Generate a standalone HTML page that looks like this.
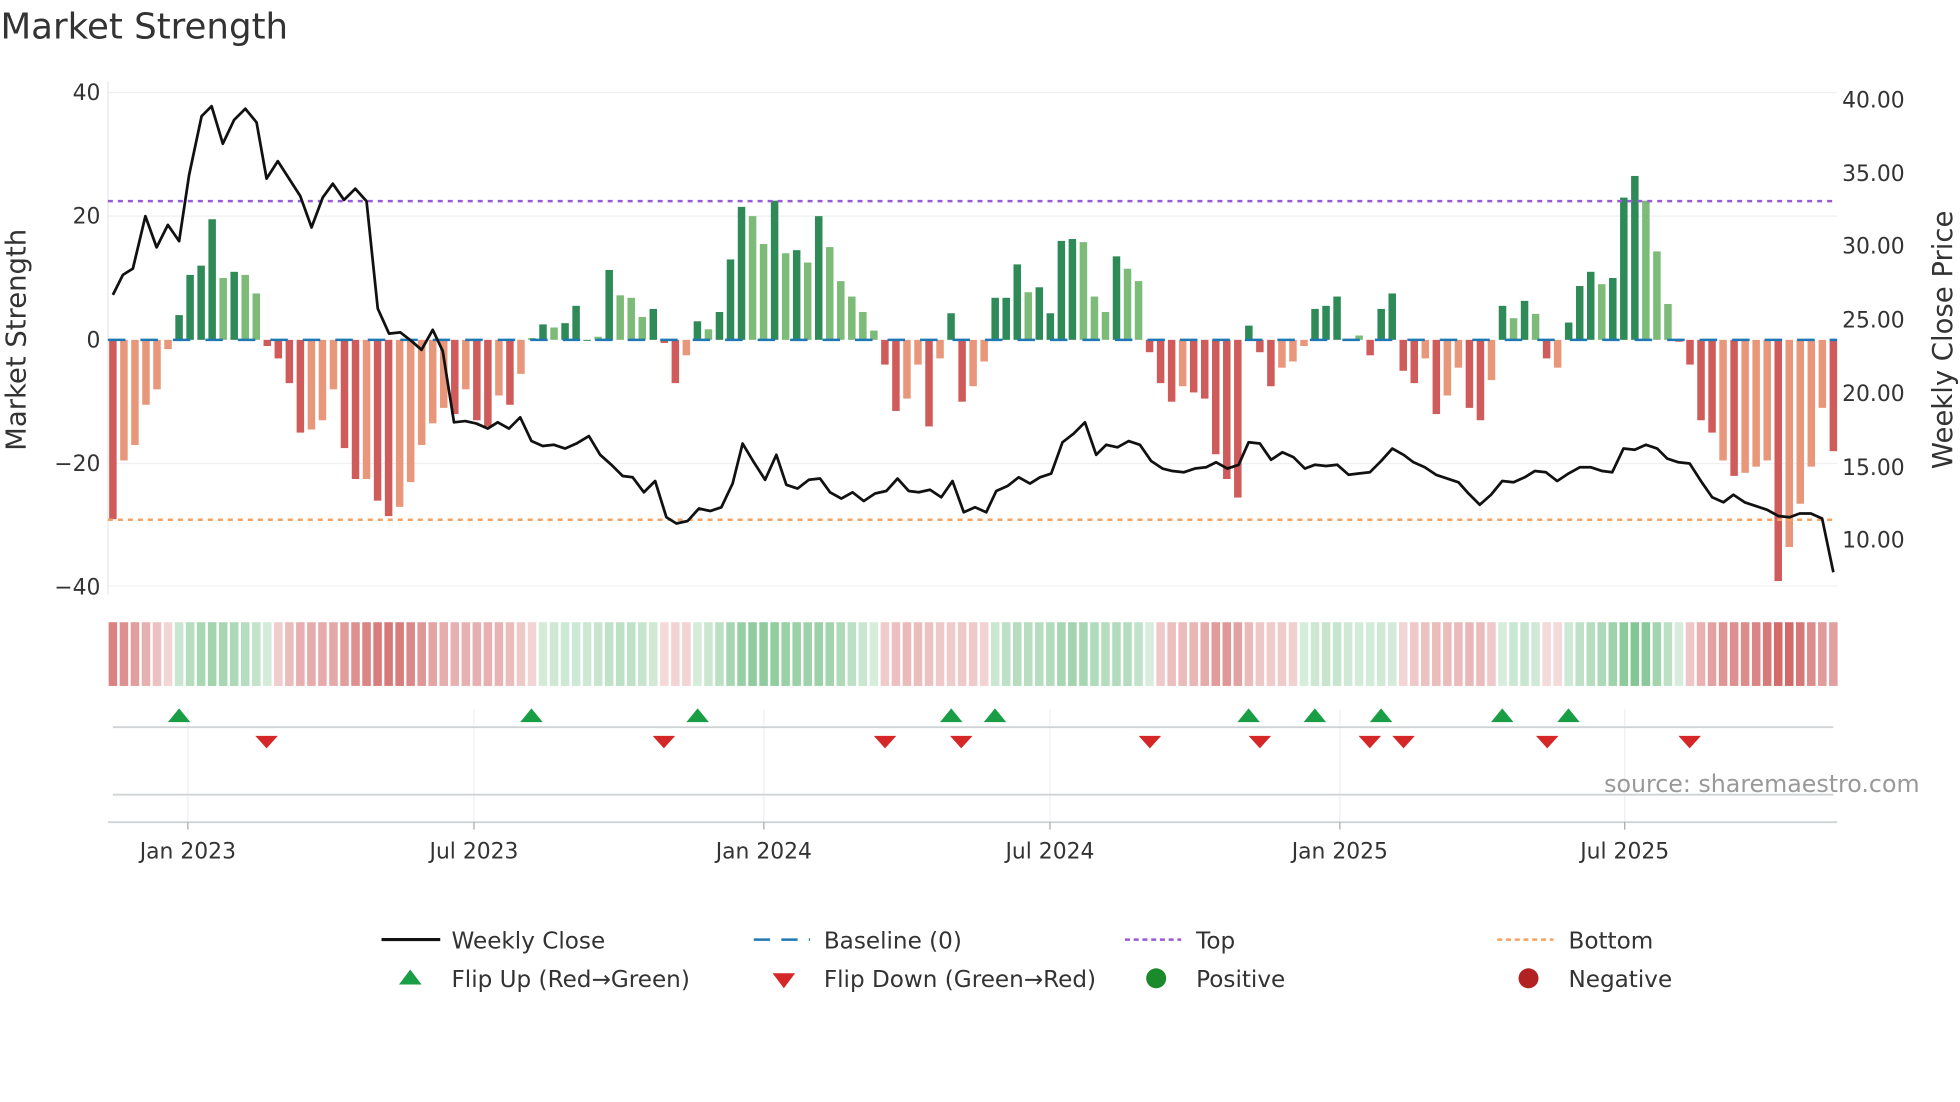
<!DOCTYPE html>
<html><head><meta charset="utf-8"><style>
html,body{margin:0;padding:0;background:#fff;}
svg{display:block;font-family:"DejaVu Sans","Liberation Sans",sans-serif;}
</style></head><body>
<svg id="s" width="1960" height="1102" viewBox="0 0 1568 882" xmlns="http://www.w3.org/2000/svg">
<rect width="1568" height="882" fill="#fff"/>
<text x="0" y="31" font-size="28.5" fill="#333">Market Strength</text>
<g stroke="#eef0f2" stroke-width="1">
<line x1="86" y1="74" x2="1470" y2="74"/><line x1="86" y1="173" x2="1470" y2="173"/>
<line x1="86" y1="371" x2="1470" y2="371"/><line x1="86" y1="469" x2="1470" y2="469"/>
</g>
<line x1="86" y1="65" x2="86" y2="476" stroke="#e6e8ea"/>
<g font-size="17.5" fill="#333" text-anchor="end">
<text x="80" y="80">40</text><text x="80" y="179">20</text><text x="80" y="278">0</text>
<text x="80" y="377">−20</text><text x="80" y="476">−40</text>
</g>
<g font-size="17.5" fill="#333">
<text x="1474" y="86">40.00</text><text x="1474" y="145">35.00</text><text x="1474" y="203">30.00</text>
<text x="1474" y="262">25.00</text><text x="1474" y="321">20.00</text><text x="1474" y="380">15.00</text>
<text x="1474" y="438">10.00</text>
</g>
<text transform="translate(20,272) rotate(-90)" font-size="22" fill="#333" text-anchor="middle">Market Strength</text>
<text transform="translate(1562,272) rotate(-90)" font-size="22" fill="#333" text-anchor="middle">Weekly Close Price</text>
<g id="bars"></g>
<line x1="86" y1="272" x2="1470" y2="272" stroke="#1f77b4" stroke-width="2" stroke-dasharray="14,12"/>
<line x1="86" y1="161" x2="1470" y2="161" stroke="#9b59d6" stroke-width="2" stroke-dasharray="4,4"/>
<line x1="86" y1="416" x2="1470" y2="416" stroke="#f4a261" stroke-width="2" stroke-dasharray="4,4"/>
<polyline id="price" fill="none" stroke="#111" stroke-width="2.2" stroke-linejoin="round"/>
<g id="heat"></g>
<g stroke="#edf0f3" stroke-width="1">
<line x1="150" y1="568" x2="150" y2="658"/><line x1="379" y1="568" x2="379" y2="658"/>
<line x1="611" y1="568" x2="611" y2="658"/><line x1="840" y1="568" x2="840" y2="658"/>
<line x1="1072" y1="568" x2="1072" y2="658"/><line x1="1300" y1="568" x2="1300" y2="658"/>
</g>
<line x1="90" y1="582" x2="1467" y2="582" stroke="#d0d3d6" stroke-width="1.5"/>
<line x1="90" y1="636" x2="1467" y2="636" stroke="#d0d3d6" stroke-width="1.5"/>
<line x1="86" y1="658" x2="1470" y2="658" stroke="#d0d3d6" stroke-width="1.5"/>
<g stroke="#aaa"><line x1="150" y1="658" x2="150" y2="664"/><line x1="379" y1="658" x2="379" y2="664"/><line x1="611" y1="658" x2="611" y2="664"/><line x1="840" y1="658" x2="840" y2="664"/><line x1="1072" y1="658" x2="1072" y2="664"/><line x1="1300" y1="658" x2="1300" y2="664"/></g>
<g id="flips"></g>
<text x="1536" y="634" font-size="19" fill="#999" text-anchor="end">source: sharemaestro.com</text>
<g font-size="17.5" fill="#333" text-anchor="middle">
<text x="150" y="687">Jan 2023</text><text x="379" y="687">Jul 2023</text><text x="611" y="687">Jan 2024</text>
<text x="840" y="687">Jul 2024</text><text x="1072" y="687">Jan 2025</text><text x="1300" y="687">Jul 2025</text>
</g>
<g font-size="18.5" fill="#333">
<line x1="305" y1="752" x2="352" y2="752" stroke="#111" stroke-width="2.5"/><text x="361" y="759">Weekly Close</text>
<line x1="603" y1="752" x2="648" y2="752" stroke="#1f77b4" stroke-width="2" stroke-dasharray="13,9"/><text x="659" y="759">Baseline (0)</text>
<line x1="900" y1="752" x2="945" y2="752" stroke="#9b59d6" stroke-width="2" stroke-dasharray="4,3"/><text x="957" y="759">Top</text>
<line x1="1198" y1="752" x2="1243" y2="752" stroke="#f4a261" stroke-width="2" stroke-dasharray="4,3"/><text x="1255" y="759">Bottom</text>
<polygon points="319,788 337,788 328,776" fill="#1a9e45"/><text x="361" y="790">Flip Up (Red→Green)</text>
<polygon points="618,779 636,779 627,791" fill="#d62728"/><text x="659" y="790">Flip Down (Green→Red)</text>
<circle cx="925" cy="783" r="8" fill="#1a8a2a"/><text x="957" y="790">Positive</text>
<circle cx="1223" cy="783" r="8" fill="#b22222"/><text x="1255" y="790">Negative</text>
</g>
</svg>
<script>
var V=[-29,-19.5,-17,-10.5,-8,-1.5,4,10.5,12,19.5,10,11,10.5,7.5,-1,-3,-7,-15,-14.5,-13,-8,-17.5,-22.5,-22.5,-26,-28.5,-27,-23,-17,-13.5,-11,-12,-8,-13,-14,-9,-10.5,-5.5,0.3,2.5,2,2.7,5.5,0,0.5,11.3,7.2,6.8,3.7,5,-0.5,-7,-2.5,3,1.7,4.5,13,21.5,20,15.5,22.5,14,14.5,12.5,20,15,9.5,7,4.5,1.5,-4,-11.5,-9.5,-4,-14,-3,4.3,-10,-7.5,-3.5,6.8,6.8,12.2,7.7,8.5,4.3,16,16.3,15.8,7,4.5,13.5,11.5,9.5,-2,-7,-10,-7.5,-8.5,-9.5,-18.5,-22.5,-25.5,2.3,-2,-7.5,-4.5,-3.5,-1,5,5.5,7,0,0.7,-2.5,5,7.5,-5,-7,-3,-12,-9,-4.5,-11,-13,-6.5,5.5,3.5,6.3,4.2,-3,-4.5,2.8,8.7,11,9,10,23,26.5,22.5,14.3,5.8,-0.3,-4,-13,-15,-19.5,-22,-21.5,-20.5,-19.5,-39,-33.5,-26.5,-20.5,-11,-18];
var L=[0,1,1,1,1,1,0,0,0,0,1,0,1,1,0,0,0,0,1,1,1,0,0,1,0,0,1,1,1,1,1,0,1,0,0,1,0,1,1,0,1,0,0,0,1,0,1,1,1,0,0,0,1,0,1,0,0,0,1,1,0,1,0,1,0,1,1,1,1,1,0,0,1,1,0,1,0,0,1,1,0,0,0,1,0,0,0,0,1,1,1,0,1,1,0,0,0,1,0,0,0,0,0,0,0,0,1,1,1,0,0,0,0,1,0,0,0,0,0,1,0,1,1,0,0,1,0,1,0,1,0,1,0,0,0,1,0,0,0,1,1,1,0,0,0,0,1,0,1,1,1,0,1,1,1,1,0];
var ns="http://www.w3.org/2000/svg",n=V.length,st=(1467-90)/(n-1);
function el(t,a,p){var e=document.createElementNS(ns,t);for(var k in a)e.setAttribute(k,a[k]);p.appendChild(e);return e;}
var B=document.getElementById('bars'),H=document.getElementById('heat');
for(var i=0;i<n;i++){var x=90+i*st,v=V[i],y0=272,y1=272-v*4.95;
var c=v>=0?(L[i]?'#7dbb78':'#2e8b57'):(L[i]?'#e8977a':'#d05b5b');
el('rect',{x:x-3,y:Math.min(y0,y1),width:6,height:Math.max(0.8,Math.abs(y1-y0)),fill:c},B);
var s=0,w=0;for(var j=-2;j<=2;j++){if(V[i+j]!==undefined){s+=V[i+j]*(3-Math.abs(j));w+=3-Math.abs(j);}}s/=w;
var a=Math.min(0.85,0.2+Math.abs(s)/30*0.6);
el('rect',{x:x-st/2+1,y:498,width:st-2,height:51,fill:s>=0?'rgb(60,165,85)':'rgb(200,70,70)','fill-opacity':a},H);}
var P=[[90,236],[98,220],[106,215],[116,173],[125,198],[134,180],[143,193],[151,140],[161,93],[169,85],[178,115],[187,96],[196,87],[205,98],[213,143],[222,129],[231,143],[240,157],[249,182],[258,158],[266,147],[275,160],[284,151],[293,161],[302,247],[311,267],[320,266],[329,273],[337,280],[346,264],[354,281],[363,338],[372,337],[381,339],[390,343],[398,338],[407,343],[416,334],[425,353],[434,357],[443,356],[452,359],[461,355],[471,349],[480,364],[489,372],[498,381],[506,382],[515,394],[524,385],[533,414],[541,419],[550,417],[559,407],[568,409],[577,406],[586,387],[594,355],[603,370],[612,384],[621,364],[629,388],[638,391],[647,384],[656,383],[664,394],[673,399],[682,394],[691,401],[700,395],[709,393],[718,383],[727,393],[735,394],[744,392],[753,398],[762,385],[771,410],[780,406],[789,410],[797,393],[806,389],[815,382],[824,387],[832,382],[841,379],[850,354],[859,347],[868,338],[877,364],[885,356],[894,358],[903,353],[912,356],[921,369],[930,375],[938,377],[947,378],[956,375],[965,374],[973,370],[982,375],[991,372],[999,354],[1008,355],[1017,368],[1026,362],[1035,366],[1044,375],[1052,372],[1061,373],[1070,372],[1079,380],[1087,379],[1096,378],[1105,369],[1114,359],[1123,364],[1131,370],[1140,374],[1149,380],[1158,383],[1167,386],[1175,395],[1184,404],[1193,396],[1202,385],[1211,386],[1220,382],[1228,377],[1237,378],[1246,385],[1255,379],[1264,374],[1273,374],[1282,377],[1290,378],[1299,359],[1308,360],[1317,356],[1326,359],[1334,367],[1343,370],[1352,371],[1361,385],[1370,398],[1379,402],[1387,396],[1396,402],[1405,405],[1414,408],[1423,413],[1432,414],[1440,411],[1449,411],[1458,415],[1467,458]];
document.getElementById('price').setAttribute('points',P.map(function(p){return p.join(',')}).join(' '));
var F=document.getElementById('flips');
[143,425,558,761,796,999,1052,1105,1202,1255].forEach(function(x){el('polygon',{points:(x-9)+',578 '+(x+9)+',578 '+x+',567',fill:'#1a9e45'},F);});
[213,531,708,769,920,1008,1096,1123,1238,1352].forEach(function(x){el('polygon',{points:(x-9)+',589 '+(x+9)+',589 '+x+',599',fill:'#d62728'},F);});
</script>
</body></html>
